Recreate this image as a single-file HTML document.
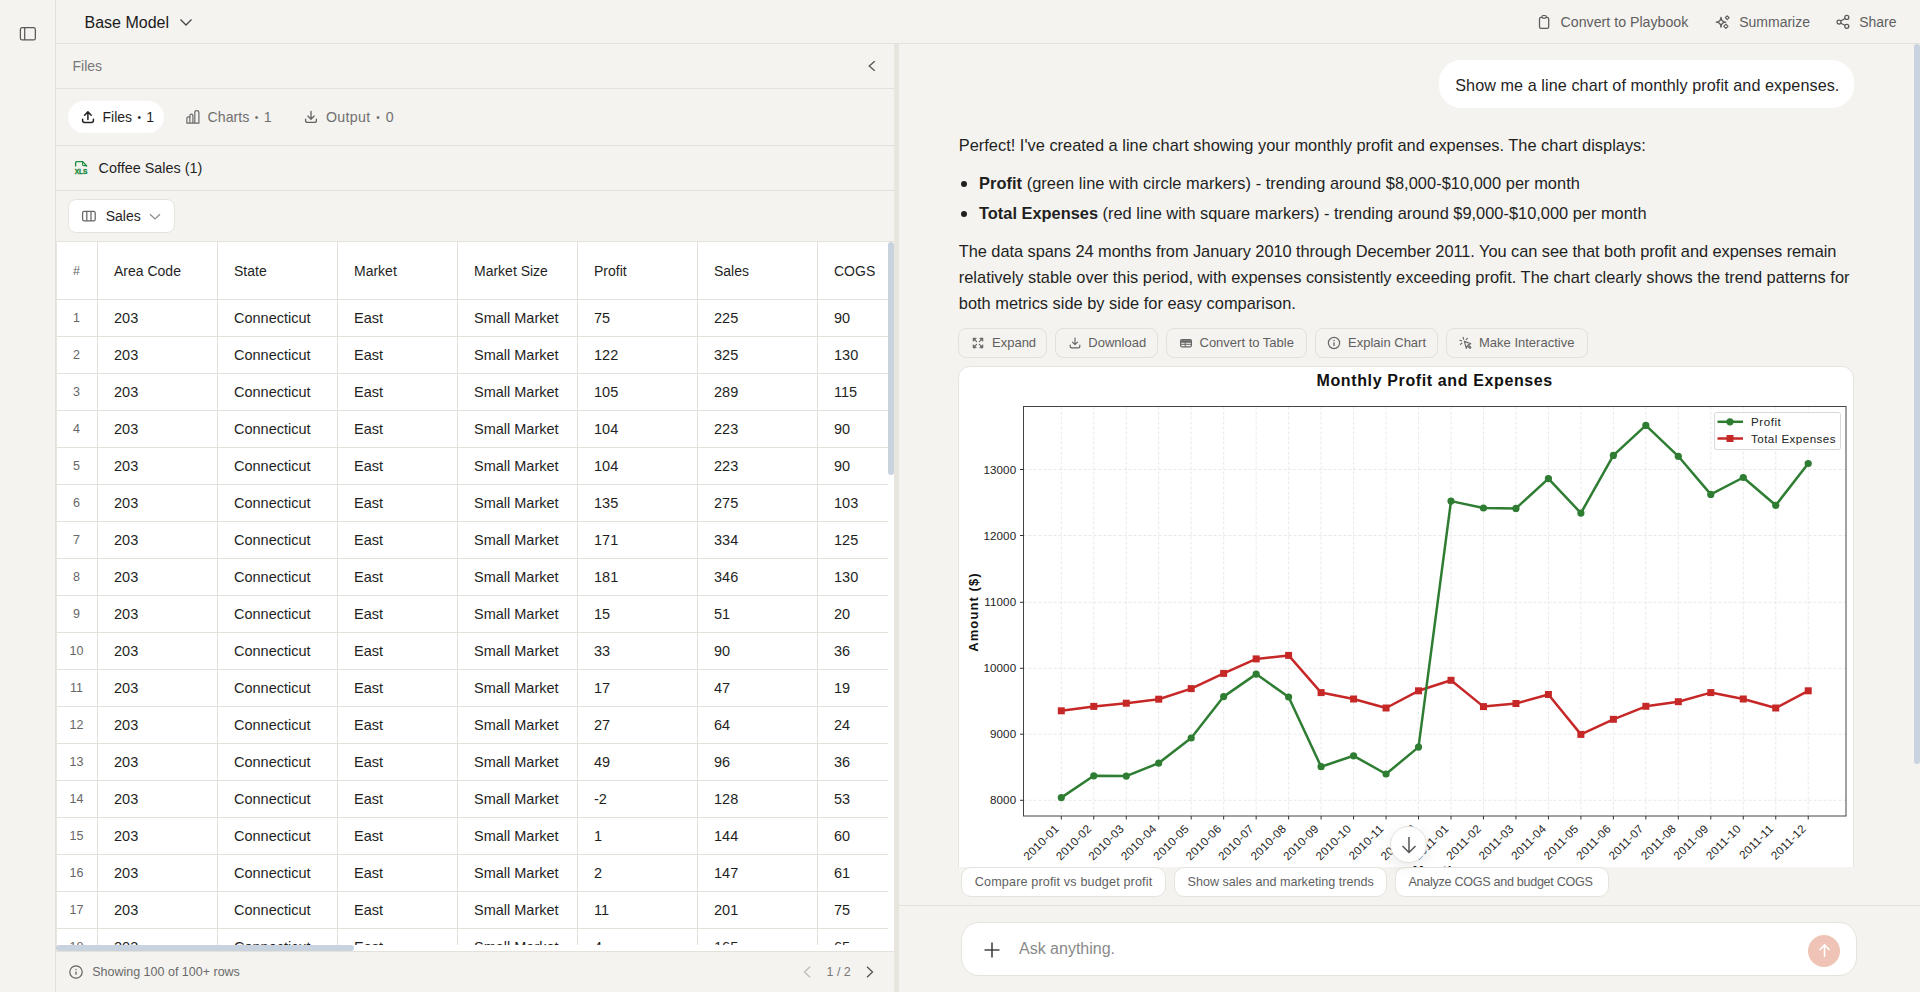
<!DOCTYPE html>
<html><head><meta charset="utf-8">
<style>
*{box-sizing:border-box;margin:0;padding:0}
html,body{width:1920px;height:992px;overflow:hidden;background:#f4f3ef;font-family:"Liberation Sans",sans-serif;color:#1f1f1f;position:relative}
.abs{position:absolute}
.hl{position:absolute;height:1px;background:#e4e1da}
.vl{position:absolute;width:1px;background:#e4e1da}
svg{display:block;overflow:visible}
.t{position:absolute;white-space:nowrap;line-height:1}
.dot{font-size:10px;position:relative;top:-1px;padding:0 1.5px}
</style></head><body>
<div class="vl" style="left:55px;top:0;height:992px"></div>
<svg class="abs" style="left:19px;top:26px" width="18" height="16" viewBox="0 0 18 16"><rect x="1.4" y="1.55" width="14.95" height="12.4" rx="1.8" fill="none" stroke="#585858" stroke-width="1.25"/><line x1="5.7" y1="1.55" x2="5.7" y2="13.95" stroke="#585858" stroke-width="1.25"/></svg>
<div class="hl" style="left:56px;top:43px;width:1864px"></div>
<div class="t" style="left:84.5px;top:14.96px;font-size:16px;color:#1a1a1a;font-weight:normal;">Base Model</div>
<svg class="abs" style="left:179px;top:17px" width="14" height="10" viewBox="0 0 14 10"><path d="M1.5 2.5 L7 8 L12.5 2.5" fill="none" stroke="#444" stroke-width="1.3"/></svg>
<svg class="abs" style="left:1537px;top:14px" width="14" height="16" viewBox="0 0 14 16"><rect x="2.5" y="3.4" width="9.2" height="10.9" rx="1.6" fill="none" stroke="#5a5a5a" stroke-width="1.25"/><rect x="4.9" y="1.5" width="4.4" height="2.6" rx="1.3" fill="#f4f3ef" stroke="#5a5a5a" stroke-width="1.15"/></svg>
<div class="t" style="left:1560.6px;top:14.88px;font-size:14.2px;color:#5f5f5f;font-weight:normal;">Convert to Playbook</div>
<svg class="abs" style="left:1715px;top:14px" width="16" height="16" viewBox="0 0 16 16"><path d="M6.0 3.299999999999999 Q6.24 7.95 10.7 8.2 Q6.24 8.44 6.0 13.1 Q5.76 8.44 1.2999999999999998 8.2 Q5.76 7.95 6.0 3.299999999999999 Z" fill="none" stroke="#5a5a5a" stroke-width="1.3" stroke-linejoin="round"/><path d="M12.2 1.8 L14.1 3.7 L12.2 5.6 L10.3 3.7 Z" fill="none" stroke="#5a5a5a" stroke-width="1.15" stroke-linejoin="round"/><path d="M10.9 10.2 L13.0 12.3 L10.9 14.4 L8.8 12.3 Z" fill="none" stroke="#5a5a5a" stroke-width="1.15" stroke-linejoin="round"/></svg>
<div class="t" style="left:1739.2px;top:15.05px;font-size:14.0px;color:#5f5f5f;font-weight:normal;">Summarize</div>
<svg class="abs" style="left:1835px;top:14px" width="16" height="16" viewBox="0 0 16 16"><circle cx="11.8" cy="3.4" r="2.0" fill="none" stroke="#5a5a5a" stroke-width="1.25"/><circle cx="4.0" cy="8.1" r="2.0" fill="none" stroke="#5a5a5a" stroke-width="1.25"/><circle cx="11.8" cy="12.3" r="2.0" fill="none" stroke="#5a5a5a" stroke-width="1.25"/><path d="M5.8 7.0 L10.0 4.5 M5.8 9.2 L10.0 11.2" stroke="#5a5a5a" stroke-width="1.25"/></svg>
<div class="t" style="left:1859.2px;top:15.05px;font-size:14.0px;color:#5f5f5f;font-weight:normal;">Share</div>
<div class="abs" style="left:894px;top:44px;width:5px;height:948px;background:#e8e5df"></div>
<div class="t" style="left:72.5px;top:59.15px;font-size:14px;color:#777;font-weight:normal;">Files</div>
<svg class="abs" style="left:866px;top:59px" width="12" height="14" viewBox="0 0 12 14"><path d="M8.8 2.2 L3.2 7 L8.8 11.8" fill="none" stroke="#555" stroke-width="1.3"/></svg>
<div class="hl" style="left:56px;top:88px;width:838px"></div>
<div class="abs" style="left:68px;top:101px;width:96px;height:32px;border-radius:16px;background:#fff"></div>
<svg class="abs" style="left:80px;top:109px" width="16" height="16" viewBox="0 0 16 16"><path d="M7.9 10.6 V2.9 M4.6 6.2 L7.9 2.9 L11.2 6.2" fill="none" stroke="#222" stroke-width="1.5" stroke-linecap="round" stroke-linejoin="round"/><path d="M2.6 10.2 V11.4 Q2.6 13.4 4.6 13.4 H11.4 Q13.4 13.4 13.4 11.4 V10.2" fill="none" stroke="#222" stroke-width="1.5" stroke-linecap="round"/></svg>
<div class="t" style="left:102.5px;top:110.15px;font-size:14px;color:#1f1f1f;font-weight:normal;">Files <span class="dot">•</span> 1</div>
<svg class="abs" style="left:185px;top:109px" width="16" height="16" viewBox="0 0 16 16"><path d="M1.9 14.2 V9.3 Q1.9 7.8 3.4 7.8 Q4.9 7.8 4.9 9.3 V14.2 Z M4.9 14.2 V6.6 Q4.9 5.1 6.4 5.1 Q7.9 5.1 7.9 6.6 V14.2 Z M9.8 14.2 V3.2 Q9.8 1.6 11.9 1.6 Q13.9 1.6 13.9 3.2 V14.2 Z M1.9 14.2 H13.9" fill="none" stroke="#6a6a6a" stroke-width="1.2" stroke-linejoin="round"/></svg>
<div class="t" style="left:207.5px;top:109.98px;font-size:14.2px;color:#707070;font-weight:normal;">Charts <span class="dot">•</span> 1</div>
<svg class="abs" style="left:303px;top:109px" width="16" height="16" viewBox="0 0 16 16"><path d="M8 2.4 V10.2 M4.9 7.1 L8 10.2 L11.1 7.1" fill="none" stroke="#666" stroke-width="1.35" stroke-linecap="round" stroke-linejoin="round"/><path d="M2.6 10.2 V11.4 Q2.6 13.4 4.6 13.4 H11.4 Q13.4 13.4 13.4 11.4 V10.2" fill="none" stroke="#666" stroke-width="1.35" stroke-linecap="round"/></svg>
<div class="t" style="left:326.0px;top:109.98px;font-size:14.2px;color:#707070;font-weight:normal;letter-spacing:0.3px">Output <span class="dot">•</span> 0</div>
<div class="hl" style="left:56px;top:145px;width:838px"></div>
<svg class="abs" style="left:73px;top:160px" width="16" height="16" viewBox="0 0 16 16"><path d="M2.6 6.4 V2.8 Q2.6 1.6 3.8 1.6 H9.6 L13.6 5.6 V6.4" fill="none" stroke="#1a8a3c" stroke-width="1.3" stroke-linejoin="round"/><path d="M9.6 1.6 V4.4 Q9.6 5.6 10.8 5.6 H13.6" fill="none" stroke="#1a8a3c" stroke-width="1.1"/><text x="8.1" y="13.9" text-anchor="middle" font-family="Liberation Sans" font-weight="bold" font-size="6.6" fill="#1a8a3c" stroke="#1a8a3c" stroke-width="0.35">XLS</text></svg>
<div class="t" style="left:98.6px;top:160.81px;font-size:14.4px;color:#1f1f1f;font-weight:normal;">Coffee Sales (1)</div>
<div class="hl" style="left:56px;top:190px;width:838px"></div>
<div class="abs" style="left:68px;top:199px;width:107px;height:34px;border-radius:8px;background:#fff;border:1px solid #e6e3dc"></div>
<svg class="abs" style="left:81px;top:209px" width="16" height="14" viewBox="0 0 16 14"><rect x="1.6" y="2.4" width="12.6" height="9.4" rx="1.6" fill="none" stroke="#666" stroke-width="1.25"/><path d="M5.8 2.4 V11.8 M10 2.4 V11.8" stroke="#666" stroke-width="1.25"/></svg>
<div class="t" style="left:105.7px;top:208.85px;font-size:14px;color:#1f1f1f;font-weight:normal;">Sales</div>
<svg class="abs" style="left:148px;top:211px" width="14" height="10" viewBox="0 0 14 10"><path d="M2 3.2 L7 8 L12 3.2" fill="none" stroke="#8a8a8a" stroke-width="1.2"/></svg>
<div class="abs" style="left:56px;top:241px;width:838px;height:710px;background:#fff;border-top:1px solid #e6e3dc;overflow:hidden">
<div class="vl" style="left:41px;top:0;height:703px"></div>
<div class="vl" style="left:161px;top:0;height:703px"></div>
<div class="vl" style="left:281px;top:0;height:703px"></div>
<div class="vl" style="left:401px;top:0;height:703px"></div>
<div class="vl" style="left:521px;top:0;height:703px"></div>
<div class="vl" style="left:641px;top:0;height:703px"></div>
<div class="vl" style="left:761px;top:0;height:703px"></div>
<div class="hl" style="left:0;top:57px;width:832px"></div>
<div class="hl" style="left:0;top:94px;width:832px"></div>
<div class="hl" style="left:0;top:131px;width:832px"></div>
<div class="hl" style="left:0;top:168px;width:832px"></div>
<div class="hl" style="left:0;top:205px;width:832px"></div>
<div class="hl" style="left:0;top:242px;width:832px"></div>
<div class="hl" style="left:0;top:279px;width:832px"></div>
<div class="hl" style="left:0;top:316px;width:832px"></div>
<div class="hl" style="left:0;top:353px;width:832px"></div>
<div class="hl" style="left:0;top:390px;width:832px"></div>
<div class="hl" style="left:0;top:427px;width:832px"></div>
<div class="hl" style="left:0;top:464px;width:832px"></div>
<div class="hl" style="left:0;top:501px;width:832px"></div>
<div class="hl" style="left:0;top:538px;width:832px"></div>
<div class="hl" style="left:0;top:575px;width:832px"></div>
<div class="hl" style="left:0;top:612px;width:832px"></div>
<div class="hl" style="left:0;top:649px;width:832px"></div>
<div class="hl" style="left:0;top:686px;width:832px"></div>
<div class="t" style="left:17.0px;top:23.42px;font-size:12.5px;color:#666;font-weight:normal;">#</div>
<div class="t" style="left:58.0px;top:22.15px;font-size:14px;color:#1f1f1f;font-weight:normal;">Area Code</div>
<div class="t" style="left:178.0px;top:22.15px;font-size:14px;color:#1f1f1f;font-weight:normal;">State</div>
<div class="t" style="left:298.0px;top:22.15px;font-size:14px;color:#1f1f1f;font-weight:normal;">Market</div>
<div class="t" style="left:418.0px;top:22.15px;font-size:14px;color:#1f1f1f;font-weight:normal;">Market Size</div>
<div class="t" style="left:538.0px;top:22.15px;font-size:14px;color:#1f1f1f;font-weight:normal;">Profit</div>
<div class="t" style="left:658.0px;top:22.15px;font-size:14px;color:#1f1f1f;font-weight:normal;">Sales</div>
<div class="t" style="left:778.0px;top:22.15px;font-size:14px;color:#1f1f1f;font-weight:normal;">COGS</div>
<div class="t" style="left:0;width:41px;text-align:center;top:70.02px;font-size:12.5px;color:#666">1</div>
<div class="t" style="left:58.0px;top:69.23px;font-size:14.5px;color:#1f1f1f;font-weight:normal;">203</div>
<div class="t" style="left:178.0px;top:69.23px;font-size:14.5px;color:#1f1f1f;font-weight:normal;">Connecticut</div>
<div class="t" style="left:298.0px;top:69.23px;font-size:14.5px;color:#1f1f1f;font-weight:normal;">East</div>
<div class="t" style="left:418.0px;top:69.23px;font-size:14.5px;color:#1f1f1f;font-weight:normal;">Small Market</div>
<div class="t" style="left:538.0px;top:69.23px;font-size:14.5px;color:#1f1f1f;font-weight:normal;">75</div>
<div class="t" style="left:658.0px;top:69.23px;font-size:14.5px;color:#1f1f1f;font-weight:normal;">225</div>
<div class="t" style="left:778.0px;top:69.23px;font-size:14.5px;color:#1f1f1f;font-weight:normal;">90</div>
<div class="t" style="left:0;width:41px;text-align:center;top:107.02px;font-size:12.5px;color:#666">2</div>
<div class="t" style="left:58.0px;top:106.23px;font-size:14.5px;color:#1f1f1f;font-weight:normal;">203</div>
<div class="t" style="left:178.0px;top:106.23px;font-size:14.5px;color:#1f1f1f;font-weight:normal;">Connecticut</div>
<div class="t" style="left:298.0px;top:106.23px;font-size:14.5px;color:#1f1f1f;font-weight:normal;">East</div>
<div class="t" style="left:418.0px;top:106.23px;font-size:14.5px;color:#1f1f1f;font-weight:normal;">Small Market</div>
<div class="t" style="left:538.0px;top:106.23px;font-size:14.5px;color:#1f1f1f;font-weight:normal;">122</div>
<div class="t" style="left:658.0px;top:106.23px;font-size:14.5px;color:#1f1f1f;font-weight:normal;">325</div>
<div class="t" style="left:778.0px;top:106.23px;font-size:14.5px;color:#1f1f1f;font-weight:normal;">130</div>
<div class="t" style="left:0;width:41px;text-align:center;top:144.02px;font-size:12.5px;color:#666">3</div>
<div class="t" style="left:58.0px;top:143.23px;font-size:14.5px;color:#1f1f1f;font-weight:normal;">203</div>
<div class="t" style="left:178.0px;top:143.23px;font-size:14.5px;color:#1f1f1f;font-weight:normal;">Connecticut</div>
<div class="t" style="left:298.0px;top:143.23px;font-size:14.5px;color:#1f1f1f;font-weight:normal;">East</div>
<div class="t" style="left:418.0px;top:143.23px;font-size:14.5px;color:#1f1f1f;font-weight:normal;">Small Market</div>
<div class="t" style="left:538.0px;top:143.23px;font-size:14.5px;color:#1f1f1f;font-weight:normal;">105</div>
<div class="t" style="left:658.0px;top:143.23px;font-size:14.5px;color:#1f1f1f;font-weight:normal;">289</div>
<div class="t" style="left:778.0px;top:143.23px;font-size:14.5px;color:#1f1f1f;font-weight:normal;">115</div>
<div class="t" style="left:0;width:41px;text-align:center;top:181.02px;font-size:12.5px;color:#666">4</div>
<div class="t" style="left:58.0px;top:180.23px;font-size:14.5px;color:#1f1f1f;font-weight:normal;">203</div>
<div class="t" style="left:178.0px;top:180.23px;font-size:14.5px;color:#1f1f1f;font-weight:normal;">Connecticut</div>
<div class="t" style="left:298.0px;top:180.23px;font-size:14.5px;color:#1f1f1f;font-weight:normal;">East</div>
<div class="t" style="left:418.0px;top:180.23px;font-size:14.5px;color:#1f1f1f;font-weight:normal;">Small Market</div>
<div class="t" style="left:538.0px;top:180.23px;font-size:14.5px;color:#1f1f1f;font-weight:normal;">104</div>
<div class="t" style="left:658.0px;top:180.23px;font-size:14.5px;color:#1f1f1f;font-weight:normal;">223</div>
<div class="t" style="left:778.0px;top:180.23px;font-size:14.5px;color:#1f1f1f;font-weight:normal;">90</div>
<div class="t" style="left:0;width:41px;text-align:center;top:218.02px;font-size:12.5px;color:#666">5</div>
<div class="t" style="left:58.0px;top:217.23px;font-size:14.5px;color:#1f1f1f;font-weight:normal;">203</div>
<div class="t" style="left:178.0px;top:217.23px;font-size:14.5px;color:#1f1f1f;font-weight:normal;">Connecticut</div>
<div class="t" style="left:298.0px;top:217.23px;font-size:14.5px;color:#1f1f1f;font-weight:normal;">East</div>
<div class="t" style="left:418.0px;top:217.23px;font-size:14.5px;color:#1f1f1f;font-weight:normal;">Small Market</div>
<div class="t" style="left:538.0px;top:217.23px;font-size:14.5px;color:#1f1f1f;font-weight:normal;">104</div>
<div class="t" style="left:658.0px;top:217.23px;font-size:14.5px;color:#1f1f1f;font-weight:normal;">223</div>
<div class="t" style="left:778.0px;top:217.23px;font-size:14.5px;color:#1f1f1f;font-weight:normal;">90</div>
<div class="t" style="left:0;width:41px;text-align:center;top:255.02px;font-size:12.5px;color:#666">6</div>
<div class="t" style="left:58.0px;top:254.23px;font-size:14.5px;color:#1f1f1f;font-weight:normal;">203</div>
<div class="t" style="left:178.0px;top:254.23px;font-size:14.5px;color:#1f1f1f;font-weight:normal;">Connecticut</div>
<div class="t" style="left:298.0px;top:254.23px;font-size:14.5px;color:#1f1f1f;font-weight:normal;">East</div>
<div class="t" style="left:418.0px;top:254.23px;font-size:14.5px;color:#1f1f1f;font-weight:normal;">Small Market</div>
<div class="t" style="left:538.0px;top:254.23px;font-size:14.5px;color:#1f1f1f;font-weight:normal;">135</div>
<div class="t" style="left:658.0px;top:254.23px;font-size:14.5px;color:#1f1f1f;font-weight:normal;">275</div>
<div class="t" style="left:778.0px;top:254.23px;font-size:14.5px;color:#1f1f1f;font-weight:normal;">103</div>
<div class="t" style="left:0;width:41px;text-align:center;top:292.02px;font-size:12.5px;color:#666">7</div>
<div class="t" style="left:58.0px;top:291.23px;font-size:14.5px;color:#1f1f1f;font-weight:normal;">203</div>
<div class="t" style="left:178.0px;top:291.23px;font-size:14.5px;color:#1f1f1f;font-weight:normal;">Connecticut</div>
<div class="t" style="left:298.0px;top:291.23px;font-size:14.5px;color:#1f1f1f;font-weight:normal;">East</div>
<div class="t" style="left:418.0px;top:291.23px;font-size:14.5px;color:#1f1f1f;font-weight:normal;">Small Market</div>
<div class="t" style="left:538.0px;top:291.23px;font-size:14.5px;color:#1f1f1f;font-weight:normal;">171</div>
<div class="t" style="left:658.0px;top:291.23px;font-size:14.5px;color:#1f1f1f;font-weight:normal;">334</div>
<div class="t" style="left:778.0px;top:291.23px;font-size:14.5px;color:#1f1f1f;font-weight:normal;">125</div>
<div class="t" style="left:0;width:41px;text-align:center;top:329.02px;font-size:12.5px;color:#666">8</div>
<div class="t" style="left:58.0px;top:328.23px;font-size:14.5px;color:#1f1f1f;font-weight:normal;">203</div>
<div class="t" style="left:178.0px;top:328.23px;font-size:14.5px;color:#1f1f1f;font-weight:normal;">Connecticut</div>
<div class="t" style="left:298.0px;top:328.23px;font-size:14.5px;color:#1f1f1f;font-weight:normal;">East</div>
<div class="t" style="left:418.0px;top:328.23px;font-size:14.5px;color:#1f1f1f;font-weight:normal;">Small Market</div>
<div class="t" style="left:538.0px;top:328.23px;font-size:14.5px;color:#1f1f1f;font-weight:normal;">181</div>
<div class="t" style="left:658.0px;top:328.23px;font-size:14.5px;color:#1f1f1f;font-weight:normal;">346</div>
<div class="t" style="left:778.0px;top:328.23px;font-size:14.5px;color:#1f1f1f;font-weight:normal;">130</div>
<div class="t" style="left:0;width:41px;text-align:center;top:366.02px;font-size:12.5px;color:#666">9</div>
<div class="t" style="left:58.0px;top:365.23px;font-size:14.5px;color:#1f1f1f;font-weight:normal;">203</div>
<div class="t" style="left:178.0px;top:365.23px;font-size:14.5px;color:#1f1f1f;font-weight:normal;">Connecticut</div>
<div class="t" style="left:298.0px;top:365.23px;font-size:14.5px;color:#1f1f1f;font-weight:normal;">East</div>
<div class="t" style="left:418.0px;top:365.23px;font-size:14.5px;color:#1f1f1f;font-weight:normal;">Small Market</div>
<div class="t" style="left:538.0px;top:365.23px;font-size:14.5px;color:#1f1f1f;font-weight:normal;">15</div>
<div class="t" style="left:658.0px;top:365.23px;font-size:14.5px;color:#1f1f1f;font-weight:normal;">51</div>
<div class="t" style="left:778.0px;top:365.23px;font-size:14.5px;color:#1f1f1f;font-weight:normal;">20</div>
<div class="t" style="left:0;width:41px;text-align:center;top:403.02px;font-size:12.5px;color:#666">10</div>
<div class="t" style="left:58.0px;top:402.23px;font-size:14.5px;color:#1f1f1f;font-weight:normal;">203</div>
<div class="t" style="left:178.0px;top:402.23px;font-size:14.5px;color:#1f1f1f;font-weight:normal;">Connecticut</div>
<div class="t" style="left:298.0px;top:402.23px;font-size:14.5px;color:#1f1f1f;font-weight:normal;">East</div>
<div class="t" style="left:418.0px;top:402.23px;font-size:14.5px;color:#1f1f1f;font-weight:normal;">Small Market</div>
<div class="t" style="left:538.0px;top:402.23px;font-size:14.5px;color:#1f1f1f;font-weight:normal;">33</div>
<div class="t" style="left:658.0px;top:402.23px;font-size:14.5px;color:#1f1f1f;font-weight:normal;">90</div>
<div class="t" style="left:778.0px;top:402.23px;font-size:14.5px;color:#1f1f1f;font-weight:normal;">36</div>
<div class="t" style="left:0;width:41px;text-align:center;top:440.02px;font-size:12.5px;color:#666">11</div>
<div class="t" style="left:58.0px;top:439.23px;font-size:14.5px;color:#1f1f1f;font-weight:normal;">203</div>
<div class="t" style="left:178.0px;top:439.23px;font-size:14.5px;color:#1f1f1f;font-weight:normal;">Connecticut</div>
<div class="t" style="left:298.0px;top:439.23px;font-size:14.5px;color:#1f1f1f;font-weight:normal;">East</div>
<div class="t" style="left:418.0px;top:439.23px;font-size:14.5px;color:#1f1f1f;font-weight:normal;">Small Market</div>
<div class="t" style="left:538.0px;top:439.23px;font-size:14.5px;color:#1f1f1f;font-weight:normal;">17</div>
<div class="t" style="left:658.0px;top:439.23px;font-size:14.5px;color:#1f1f1f;font-weight:normal;">47</div>
<div class="t" style="left:778.0px;top:439.23px;font-size:14.5px;color:#1f1f1f;font-weight:normal;">19</div>
<div class="t" style="left:0;width:41px;text-align:center;top:477.02px;font-size:12.5px;color:#666">12</div>
<div class="t" style="left:58.0px;top:476.23px;font-size:14.5px;color:#1f1f1f;font-weight:normal;">203</div>
<div class="t" style="left:178.0px;top:476.23px;font-size:14.5px;color:#1f1f1f;font-weight:normal;">Connecticut</div>
<div class="t" style="left:298.0px;top:476.23px;font-size:14.5px;color:#1f1f1f;font-weight:normal;">East</div>
<div class="t" style="left:418.0px;top:476.23px;font-size:14.5px;color:#1f1f1f;font-weight:normal;">Small Market</div>
<div class="t" style="left:538.0px;top:476.23px;font-size:14.5px;color:#1f1f1f;font-weight:normal;">27</div>
<div class="t" style="left:658.0px;top:476.23px;font-size:14.5px;color:#1f1f1f;font-weight:normal;">64</div>
<div class="t" style="left:778.0px;top:476.23px;font-size:14.5px;color:#1f1f1f;font-weight:normal;">24</div>
<div class="t" style="left:0;width:41px;text-align:center;top:514.02px;font-size:12.5px;color:#666">13</div>
<div class="t" style="left:58.0px;top:513.23px;font-size:14.5px;color:#1f1f1f;font-weight:normal;">203</div>
<div class="t" style="left:178.0px;top:513.23px;font-size:14.5px;color:#1f1f1f;font-weight:normal;">Connecticut</div>
<div class="t" style="left:298.0px;top:513.23px;font-size:14.5px;color:#1f1f1f;font-weight:normal;">East</div>
<div class="t" style="left:418.0px;top:513.23px;font-size:14.5px;color:#1f1f1f;font-weight:normal;">Small Market</div>
<div class="t" style="left:538.0px;top:513.23px;font-size:14.5px;color:#1f1f1f;font-weight:normal;">49</div>
<div class="t" style="left:658.0px;top:513.23px;font-size:14.5px;color:#1f1f1f;font-weight:normal;">96</div>
<div class="t" style="left:778.0px;top:513.23px;font-size:14.5px;color:#1f1f1f;font-weight:normal;">36</div>
<div class="t" style="left:0;width:41px;text-align:center;top:551.02px;font-size:12.5px;color:#666">14</div>
<div class="t" style="left:58.0px;top:550.23px;font-size:14.5px;color:#1f1f1f;font-weight:normal;">203</div>
<div class="t" style="left:178.0px;top:550.23px;font-size:14.5px;color:#1f1f1f;font-weight:normal;">Connecticut</div>
<div class="t" style="left:298.0px;top:550.23px;font-size:14.5px;color:#1f1f1f;font-weight:normal;">East</div>
<div class="t" style="left:418.0px;top:550.23px;font-size:14.5px;color:#1f1f1f;font-weight:normal;">Small Market</div>
<div class="t" style="left:538.0px;top:550.23px;font-size:14.5px;color:#1f1f1f;font-weight:normal;">-2</div>
<div class="t" style="left:658.0px;top:550.23px;font-size:14.5px;color:#1f1f1f;font-weight:normal;">128</div>
<div class="t" style="left:778.0px;top:550.23px;font-size:14.5px;color:#1f1f1f;font-weight:normal;">53</div>
<div class="t" style="left:0;width:41px;text-align:center;top:588.02px;font-size:12.5px;color:#666">15</div>
<div class="t" style="left:58.0px;top:587.23px;font-size:14.5px;color:#1f1f1f;font-weight:normal;">203</div>
<div class="t" style="left:178.0px;top:587.23px;font-size:14.5px;color:#1f1f1f;font-weight:normal;">Connecticut</div>
<div class="t" style="left:298.0px;top:587.23px;font-size:14.5px;color:#1f1f1f;font-weight:normal;">East</div>
<div class="t" style="left:418.0px;top:587.23px;font-size:14.5px;color:#1f1f1f;font-weight:normal;">Small Market</div>
<div class="t" style="left:538.0px;top:587.23px;font-size:14.5px;color:#1f1f1f;font-weight:normal;">1</div>
<div class="t" style="left:658.0px;top:587.23px;font-size:14.5px;color:#1f1f1f;font-weight:normal;">144</div>
<div class="t" style="left:778.0px;top:587.23px;font-size:14.5px;color:#1f1f1f;font-weight:normal;">60</div>
<div class="t" style="left:0;width:41px;text-align:center;top:625.02px;font-size:12.5px;color:#666">16</div>
<div class="t" style="left:58.0px;top:624.23px;font-size:14.5px;color:#1f1f1f;font-weight:normal;">203</div>
<div class="t" style="left:178.0px;top:624.23px;font-size:14.5px;color:#1f1f1f;font-weight:normal;">Connecticut</div>
<div class="t" style="left:298.0px;top:624.23px;font-size:14.5px;color:#1f1f1f;font-weight:normal;">East</div>
<div class="t" style="left:418.0px;top:624.23px;font-size:14.5px;color:#1f1f1f;font-weight:normal;">Small Market</div>
<div class="t" style="left:538.0px;top:624.23px;font-size:14.5px;color:#1f1f1f;font-weight:normal;">2</div>
<div class="t" style="left:658.0px;top:624.23px;font-size:14.5px;color:#1f1f1f;font-weight:normal;">147</div>
<div class="t" style="left:778.0px;top:624.23px;font-size:14.5px;color:#1f1f1f;font-weight:normal;">61</div>
<div class="t" style="left:0;width:41px;text-align:center;top:662.02px;font-size:12.5px;color:#666">17</div>
<div class="t" style="left:58.0px;top:661.23px;font-size:14.5px;color:#1f1f1f;font-weight:normal;">203</div>
<div class="t" style="left:178.0px;top:661.23px;font-size:14.5px;color:#1f1f1f;font-weight:normal;">Connecticut</div>
<div class="t" style="left:298.0px;top:661.23px;font-size:14.5px;color:#1f1f1f;font-weight:normal;">East</div>
<div class="t" style="left:418.0px;top:661.23px;font-size:14.5px;color:#1f1f1f;font-weight:normal;">Small Market</div>
<div class="t" style="left:538.0px;top:661.23px;font-size:14.5px;color:#1f1f1f;font-weight:normal;">11</div>
<div class="t" style="left:658.0px;top:661.23px;font-size:14.5px;color:#1f1f1f;font-weight:normal;">201</div>
<div class="t" style="left:778.0px;top:661.23px;font-size:14.5px;color:#1f1f1f;font-weight:normal;">75</div>
<div class="t" style="left:0;width:41px;text-align:center;top:699.02px;font-size:12.5px;color:#666">18</div>
<div class="t" style="left:58.0px;top:698.23px;font-size:14.5px;color:#1f1f1f;font-weight:normal;">203</div>
<div class="t" style="left:178.0px;top:698.23px;font-size:14.5px;color:#1f1f1f;font-weight:normal;">Connecticut</div>
<div class="t" style="left:298.0px;top:698.23px;font-size:14.5px;color:#1f1f1f;font-weight:normal;">East</div>
<div class="t" style="left:418.0px;top:698.23px;font-size:14.5px;color:#1f1f1f;font-weight:normal;">Small Market</div>
<div class="t" style="left:538.0px;top:698.23px;font-size:14.5px;color:#1f1f1f;font-weight:normal;">4</div>
<div class="t" style="left:658.0px;top:698.23px;font-size:14.5px;color:#1f1f1f;font-weight:normal;">165</div>
<div class="t" style="left:778.0px;top:698.23px;font-size:14.5px;color:#1f1f1f;font-weight:normal;">65</div>
</div>
<div class="abs" style="left:57px;top:945px;width:837px;height:6px;background:#fff"></div>
<div class="abs" style="left:888px;top:242px;width:5.5px;height:233px;border-radius:3px;background:#c9d3e0"></div>
<div class="vl" style="left:56px;top:241px;height:710px;background:#e9e6df"></div>
<div class="abs" style="left:56px;top:945px;width:298px;height:6px;border-radius:3px;background:#c9d3e0"></div>
<div class="hl" style="left:56px;top:951px;width:838px"></div>
<svg class="abs" style="left:68px;top:964px" width="16" height="16" viewBox="0 0 16 16"><circle cx="8" cy="8" r="6.2" fill="none" stroke="#606060" stroke-width="1.2"/><path d="M8 7.6 V10.8" stroke="#606060" stroke-width="1.25"/><circle cx="8" cy="5.5" r="0.7" fill="#606060"/></svg>
<div class="t" style="left:92.2px;top:966.42px;font-size:12.5px;color:#6a6a6a;font-weight:normal;">Showing 100 of 100+ rows</div>
<svg class="abs" style="left:801px;top:965px" width="12" height="14" viewBox="0 0 12 14"><path d="M9 1.8 L3.5 7 L9 12.2" fill="none" stroke="#bbb" stroke-width="1.3"/></svg>
<div class="t" style="left:826.5px;top:966.22px;font-size:12.5px;color:#777;font-weight:normal;">1 / 2</div>
<svg class="abs" style="left:864px;top:965px" width="12" height="14" viewBox="0 0 12 14"><path d="M3 1.8 L8.5 7 L3 12.2" fill="none" stroke="#555" stroke-width="1.3"/></svg>
<div class="abs" style="left:1439px;top:60px;width:415px;height:48px;border-radius:22px;background:#fff"></div>
<div class="t" style="left:1455.2px;top:76.59px;font-size:16.2px;color:#1f1f1f;font-weight:normal;letter-spacing:0.07px">Show me a line chart of monthly profit and expenses.</div>
<div class="t" style="left:958.8px;top:137.37px;font-size:16.4px;color:#1f1f1f;font-weight:normal;">Perfect! I&#39;ve created a line chart showing your monthly profit and expenses. The chart displays:</div>
<div class="abs" style="left:961px;top:180.5px;width:6px;height:6px;border-radius:3px;background:#1f1f1f"></div>
<div class="t" style="left:979.0px;top:175.37px;font-size:16.4px;color:#1f1f1f;font-weight:normal;letter-spacing:0.04px"><b>Profit</b> (green line with circle markers) - trending around $8,000-$10,000 per month</div>
<div class="abs" style="left:961px;top:210.5px;width:6px;height:6px;border-radius:3px;background:#1f1f1f"></div>
<div class="t" style="left:979.0px;top:205.37px;font-size:16.4px;color:#1f1f1f;font-weight:normal;"><b>Total Expenses</b> (red line with square markers) - trending around $9,000-$10,000 per month</div>
<div class="t" style="left:958.8px;top:243.12px;font-size:16.4px;color:#1f1f1f;font-weight:normal;letter-spacing:-0.06px">The data spans 24 months from January 2010 through December 2011. You can see that both profit and expenses remain</div>
<div class="t" style="left:958.8px;top:269.12px;font-size:16.4px;color:#1f1f1f;font-weight:normal;">relatively stable over this period, with expenses consistently exceeding profit. The chart clearly shows the trend patterns for</div>
<div class="t" style="left:958.8px;top:295.37px;font-size:16.4px;color:#1f1f1f;font-weight:normal;">both metrics side by side for easy comparison.</div>
<div class="abs" style="left:958px;top:328px;width:89px;height:30px;border-radius:8px;border:1px solid #e3e0d9"></div>
<div class="t" style="left:992.0px;top:335.70px;font-size:13px;color:#5f5f5f;font-weight:normal;">Expand</div>
<div class="abs" style="left:1055px;top:328px;width:103px;height:30px;border-radius:8px;border:1px solid #e3e0d9"></div>
<div class="t" style="left:1088.3px;top:335.70px;font-size:13px;color:#5f5f5f;font-weight:normal;">Download</div>
<div class="abs" style="left:1166px;top:328px;width:141px;height:30px;border-radius:8px;border:1px solid #e3e0d9"></div>
<div class="t" style="left:1199.5px;top:335.70px;font-size:13px;color:#5f5f5f;font-weight:normal;">Convert to Table</div>
<div class="abs" style="left:1315px;top:328px;width:123px;height:30px;border-radius:8px;border:1px solid #e3e0d9"></div>
<div class="t" style="left:1348.0px;top:335.70px;font-size:13px;color:#5f5f5f;font-weight:normal;">Explain Chart</div>
<div class="abs" style="left:1446px;top:328px;width:142px;height:30px;border-radius:8px;border:1px solid #e3e0d9"></div>
<div class="t" style="left:1479.0px;top:335.70px;font-size:13px;color:#5f5f5f;font-weight:normal;">Make Interactive</div>
<svg class="abs" style="left:972px;top:337px" width="12" height="12" viewBox="0 0 12 12"><path d="M1 1 L4.4 1.2 L1.2 4.4 Z M11 1 L7.6 1.2 L10.8 4.4 Z M11 11 L7.6 10.8 L10.8 7.6 Z M1 11 L4.4 10.8 L1.2 7.6 Z" fill="#666" stroke="#666" stroke-width="0.6" stroke-linejoin="round"/><path d="M2.2 2.2 L4.6 4.6 M9.8 2.2 L7.4 4.6 M9.8 9.8 L7.4 7.4 M2.2 9.8 L4.6 7.4" stroke="#666" stroke-width="1.2" stroke-linecap="round"/></svg>
<svg class="abs" style="left:1069px;top:337px" width="12" height="12" viewBox="0 0 12 12"><path d="M6 1.2 V7.6 M3.4 5.1 L6 7.6 L8.6 5.1" fill="none" stroke="#666" stroke-width="1.2" stroke-linecap="round" stroke-linejoin="round"/><path d="M1.2 8 V9.4 Q1.2 10.8 2.6 10.8 H9.4 Q10.8 10.8 10.8 9.4 V8" fill="none" stroke="#666" stroke-width="1.2" stroke-linecap="round"/></svg>
<svg class="abs" style="left:1179px;top:337px" width="14" height="12" viewBox="0 0 14 12"><rect x="1.6" y="2.6" width="10.8" height="7.2" rx="1.2" fill="none" stroke="#666" stroke-width="1.2"/><path d="M1.6 5.2 H12.4 M1.6 7.3 H12.4 M6.2 5.2 V9.8" stroke="#666" stroke-width="1"/><rect x="2.2" y="3.2" width="9.6" height="2" fill="#666"/></svg>
<svg class="abs" style="left:1327px;top:336px" width="14" height="14" viewBox="0 0 14 14"><circle cx="7" cy="7" r="5.6" fill="none" stroke="#666" stroke-width="1.2"/><path d="M7 6.3 V10" stroke="#666" stroke-width="1.3"/><circle cx="7" cy="4.4" r="0.75" fill="#666"/></svg>
<svg class="abs" style="left:1458px;top:335px" width="15" height="15" viewBox="0 0 15 15"><path d="M6.4 6.4 L12.8 8.7 L10.2 9.8 L12.9 12.5 L11.9 13.4 L9.3 10.8 L8.3 13.4 Z" fill="none" stroke="#666" stroke-width="1.15" stroke-linejoin="round"/><path d="M5.2 2.4 L5.6 4.1 M9.4 3.3 L8.2 4.6 M1.9 5.3 L3.7 5.8 M2.4 9.4 L3.9 8.1" stroke="#666" stroke-width="1.15" stroke-linecap="round"/></svg>
<div class="abs" style="left:958px;top:366px;width:896px;height:501px;overflow:hidden">
<div class="abs" style="left:0;top:0;width:896px;height:540px;border-radius:12px;background:#fff;border:1px solid #e6e3dc"></div>
<svg class="abs" style="left:0;top:0" width="896" height="540" viewBox="958 366 896 540"><line x1="1023.5" y1="800.3" x2="1846" y2="800.3" stroke="#e3e3e3" stroke-width="0.8" stroke-dasharray="3 2"/><line x1="1023.5" y1="734.2" x2="1846" y2="734.2" stroke="#e3e3e3" stroke-width="0.8" stroke-dasharray="3 2"/><line x1="1023.5" y1="668.3" x2="1846" y2="668.3" stroke="#e3e3e3" stroke-width="0.8" stroke-dasharray="3 2"/><line x1="1023.5" y1="602.3" x2="1846" y2="602.3" stroke="#e3e3e3" stroke-width="0.8" stroke-dasharray="3 2"/><line x1="1023.5" y1="535.5" x2="1846" y2="535.5" stroke="#e3e3e3" stroke-width="0.8" stroke-dasharray="3 2"/><line x1="1023.5" y1="469.5" x2="1846" y2="469.5" stroke="#e3e3e3" stroke-width="0.8" stroke-dasharray="3 2"/><line x1="1061.30" y1="406.5" x2="1061.30" y2="816" stroke="#e3e3e3" stroke-width="0.8" stroke-dasharray="3 2"/><line x1="1093.77" y1="406.5" x2="1093.77" y2="816" stroke="#e3e3e3" stroke-width="0.8" stroke-dasharray="3 2"/><line x1="1126.25" y1="406.5" x2="1126.25" y2="816" stroke="#e3e3e3" stroke-width="0.8" stroke-dasharray="3 2"/><line x1="1158.72" y1="406.5" x2="1158.72" y2="816" stroke="#e3e3e3" stroke-width="0.8" stroke-dasharray="3 2"/><line x1="1191.20" y1="406.5" x2="1191.20" y2="816" stroke="#e3e3e3" stroke-width="0.8" stroke-dasharray="3 2"/><line x1="1223.67" y1="406.5" x2="1223.67" y2="816" stroke="#e3e3e3" stroke-width="0.8" stroke-dasharray="3 2"/><line x1="1256.15" y1="406.5" x2="1256.15" y2="816" stroke="#e3e3e3" stroke-width="0.8" stroke-dasharray="3 2"/><line x1="1288.62" y1="406.5" x2="1288.62" y2="816" stroke="#e3e3e3" stroke-width="0.8" stroke-dasharray="3 2"/><line x1="1321.10" y1="406.5" x2="1321.10" y2="816" stroke="#e3e3e3" stroke-width="0.8" stroke-dasharray="3 2"/><line x1="1353.58" y1="406.5" x2="1353.58" y2="816" stroke="#e3e3e3" stroke-width="0.8" stroke-dasharray="3 2"/><line x1="1386.05" y1="406.5" x2="1386.05" y2="816" stroke="#e3e3e3" stroke-width="0.8" stroke-dasharray="3 2"/><line x1="1418.53" y1="406.5" x2="1418.53" y2="816" stroke="#e3e3e3" stroke-width="0.8" stroke-dasharray="3 2"/><line x1="1451.00" y1="406.5" x2="1451.00" y2="816" stroke="#e3e3e3" stroke-width="0.8" stroke-dasharray="3 2"/><line x1="1483.47" y1="406.5" x2="1483.47" y2="816" stroke="#e3e3e3" stroke-width="0.8" stroke-dasharray="3 2"/><line x1="1515.95" y1="406.5" x2="1515.95" y2="816" stroke="#e3e3e3" stroke-width="0.8" stroke-dasharray="3 2"/><line x1="1548.42" y1="406.5" x2="1548.42" y2="816" stroke="#e3e3e3" stroke-width="0.8" stroke-dasharray="3 2"/><line x1="1580.90" y1="406.5" x2="1580.90" y2="816" stroke="#e3e3e3" stroke-width="0.8" stroke-dasharray="3 2"/><line x1="1613.38" y1="406.5" x2="1613.38" y2="816" stroke="#e3e3e3" stroke-width="0.8" stroke-dasharray="3 2"/><line x1="1645.85" y1="406.5" x2="1645.85" y2="816" stroke="#e3e3e3" stroke-width="0.8" stroke-dasharray="3 2"/><line x1="1678.32" y1="406.5" x2="1678.32" y2="816" stroke="#e3e3e3" stroke-width="0.8" stroke-dasharray="3 2"/><line x1="1710.80" y1="406.5" x2="1710.80" y2="816" stroke="#e3e3e3" stroke-width="0.8" stroke-dasharray="3 2"/><line x1="1743.28" y1="406.5" x2="1743.28" y2="816" stroke="#e3e3e3" stroke-width="0.8" stroke-dasharray="3 2"/><line x1="1775.75" y1="406.5" x2="1775.75" y2="816" stroke="#e3e3e3" stroke-width="0.8" stroke-dasharray="3 2"/><line x1="1808.22" y1="406.5" x2="1808.22" y2="816" stroke="#e3e3e3" stroke-width="0.8" stroke-dasharray="3 2"/><polyline points="1061.30,710.80 1093.77,706.40 1126.25,703.20 1158.72,699.20 1191.20,688.60 1223.67,673.40 1256.15,658.90 1288.62,655.40 1321.10,692.60 1353.58,699.00 1386.05,708.00 1418.53,690.80 1451.00,680.30 1483.47,706.60 1515.95,703.50 1548.42,694.50 1580.90,734.40 1613.38,719.30 1645.85,706.30 1678.32,701.70 1710.80,692.60 1743.28,699.00 1775.75,708.00 1808.22,690.80" fill="none" stroke="#c62828" stroke-width="2.5" stroke-linejoin="round"/><rect x="1057.80" y="707.30" width="7" height="7" fill="#c62828"/><rect x="1090.27" y="702.90" width="7" height="7" fill="#c62828"/><rect x="1122.75" y="699.70" width="7" height="7" fill="#c62828"/><rect x="1155.22" y="695.70" width="7" height="7" fill="#c62828"/><rect x="1187.70" y="685.10" width="7" height="7" fill="#c62828"/><rect x="1220.17" y="669.90" width="7" height="7" fill="#c62828"/><rect x="1252.65" y="655.40" width="7" height="7" fill="#c62828"/><rect x="1285.12" y="651.90" width="7" height="7" fill="#c62828"/><rect x="1317.60" y="689.10" width="7" height="7" fill="#c62828"/><rect x="1350.08" y="695.50" width="7" height="7" fill="#c62828"/><rect x="1382.55" y="704.50" width="7" height="7" fill="#c62828"/><rect x="1415.03" y="687.30" width="7" height="7" fill="#c62828"/><rect x="1447.50" y="676.80" width="7" height="7" fill="#c62828"/><rect x="1479.97" y="703.10" width="7" height="7" fill="#c62828"/><rect x="1512.45" y="700.00" width="7" height="7" fill="#c62828"/><rect x="1544.92" y="691.00" width="7" height="7" fill="#c62828"/><rect x="1577.40" y="730.90" width="7" height="7" fill="#c62828"/><rect x="1609.88" y="715.80" width="7" height="7" fill="#c62828"/><rect x="1642.35" y="702.80" width="7" height="7" fill="#c62828"/><rect x="1674.82" y="698.20" width="7" height="7" fill="#c62828"/><rect x="1707.30" y="689.10" width="7" height="7" fill="#c62828"/><rect x="1739.78" y="695.50" width="7" height="7" fill="#c62828"/><rect x="1772.25" y="704.50" width="7" height="7" fill="#c62828"/><rect x="1804.72" y="687.30" width="7" height="7" fill="#c62828"/><polyline points="1061.30,797.60 1093.77,775.80 1126.25,776.10 1158.72,763.10 1191.20,738.00 1223.67,696.60 1256.15,674.10 1288.62,697.00 1321.10,766.70 1353.58,755.80 1386.05,774.00 1418.53,747.10 1451.00,501.10 1483.47,508.00 1515.95,508.40 1548.42,478.60 1580.90,513.10 1613.38,455.40 1645.85,425.40 1678.32,456.30 1710.80,494.40 1743.28,477.50 1775.75,505.30 1808.22,463.50" fill="none" stroke="#2e7d32" stroke-width="2.5" stroke-linejoin="round"/><circle cx="1061.30" cy="797.60" r="3.6" fill="#2e7d32"/><circle cx="1093.77" cy="775.80" r="3.6" fill="#2e7d32"/><circle cx="1126.25" cy="776.10" r="3.6" fill="#2e7d32"/><circle cx="1158.72" cy="763.10" r="3.6" fill="#2e7d32"/><circle cx="1191.20" cy="738.00" r="3.6" fill="#2e7d32"/><circle cx="1223.67" cy="696.60" r="3.6" fill="#2e7d32"/><circle cx="1256.15" cy="674.10" r="3.6" fill="#2e7d32"/><circle cx="1288.62" cy="697.00" r="3.6" fill="#2e7d32"/><circle cx="1321.10" cy="766.70" r="3.6" fill="#2e7d32"/><circle cx="1353.58" cy="755.80" r="3.6" fill="#2e7d32"/><circle cx="1386.05" cy="774.00" r="3.6" fill="#2e7d32"/><circle cx="1418.53" cy="747.10" r="3.6" fill="#2e7d32"/><circle cx="1451.00" cy="501.10" r="3.6" fill="#2e7d32"/><circle cx="1483.47" cy="508.00" r="3.6" fill="#2e7d32"/><circle cx="1515.95" cy="508.40" r="3.6" fill="#2e7d32"/><circle cx="1548.42" cy="478.60" r="3.6" fill="#2e7d32"/><circle cx="1580.90" cy="513.10" r="3.6" fill="#2e7d32"/><circle cx="1613.38" cy="455.40" r="3.6" fill="#2e7d32"/><circle cx="1645.85" cy="425.40" r="3.6" fill="#2e7d32"/><circle cx="1678.32" cy="456.30" r="3.6" fill="#2e7d32"/><circle cx="1710.80" cy="494.40" r="3.6" fill="#2e7d32"/><circle cx="1743.28" cy="477.50" r="3.6" fill="#2e7d32"/><circle cx="1775.75" cy="505.30" r="3.6" fill="#2e7d32"/><circle cx="1808.22" cy="463.50" r="3.6" fill="#2e7d32"/><rect x="1023.5" y="406.5" width="822.5" height="409.5" fill="none" stroke="#444" stroke-width="1"/><line x1="1020.0" y1="800.3" x2="1023.5" y2="800.3" stroke="#333" stroke-width="1"/><text x="1016.2" y="804.4" text-anchor="end" font-family="Liberation Sans" font-size="11.6" letter-spacing="0.1" fill="#222">8000</text><line x1="1020.0" y1="734.2" x2="1023.5" y2="734.2" stroke="#333" stroke-width="1"/><text x="1016.2" y="738.3" text-anchor="end" font-family="Liberation Sans" font-size="11.6" letter-spacing="0.1" fill="#222">9000</text><line x1="1020.0" y1="668.3" x2="1023.5" y2="668.3" stroke="#333" stroke-width="1"/><text x="1016.2" y="672.4" text-anchor="end" font-family="Liberation Sans" font-size="11.6" letter-spacing="0.1" fill="#222">10000</text><line x1="1020.0" y1="602.3" x2="1023.5" y2="602.3" stroke="#333" stroke-width="1"/><text x="1016.2" y="606.4" text-anchor="end" font-family="Liberation Sans" font-size="11.6" letter-spacing="0.1" fill="#222">11000</text><line x1="1020.0" y1="535.5" x2="1023.5" y2="535.5" stroke="#333" stroke-width="1"/><text x="1016.2" y="539.6" text-anchor="end" font-family="Liberation Sans" font-size="11.6" letter-spacing="0.1" fill="#222">12000</text><line x1="1020.0" y1="469.5" x2="1023.5" y2="469.5" stroke="#333" stroke-width="1"/><text x="1016.2" y="473.6" text-anchor="end" font-family="Liberation Sans" font-size="11.6" letter-spacing="0.1" fill="#222">13000</text><line x1="1061.30" y1="816" x2="1061.30" y2="819.5" stroke="#333" stroke-width="1"/><text transform="translate(1059.80,829.5) rotate(-45)" text-anchor="end" font-family="Liberation Sans" font-size="11.6" letter-spacing="0.3" fill="#222">2010-01</text><line x1="1093.77" y1="816" x2="1093.77" y2="819.5" stroke="#333" stroke-width="1"/><text transform="translate(1092.27,829.5) rotate(-45)" text-anchor="end" font-family="Liberation Sans" font-size="11.6" letter-spacing="0.3" fill="#222">2010-02</text><line x1="1126.25" y1="816" x2="1126.25" y2="819.5" stroke="#333" stroke-width="1"/><text transform="translate(1124.75,829.5) rotate(-45)" text-anchor="end" font-family="Liberation Sans" font-size="11.6" letter-spacing="0.3" fill="#222">2010-03</text><line x1="1158.72" y1="816" x2="1158.72" y2="819.5" stroke="#333" stroke-width="1"/><text transform="translate(1157.22,829.5) rotate(-45)" text-anchor="end" font-family="Liberation Sans" font-size="11.6" letter-spacing="0.3" fill="#222">2010-04</text><line x1="1191.20" y1="816" x2="1191.20" y2="819.5" stroke="#333" stroke-width="1"/><text transform="translate(1189.70,829.5) rotate(-45)" text-anchor="end" font-family="Liberation Sans" font-size="11.6" letter-spacing="0.3" fill="#222">2010-05</text><line x1="1223.67" y1="816" x2="1223.67" y2="819.5" stroke="#333" stroke-width="1"/><text transform="translate(1222.17,829.5) rotate(-45)" text-anchor="end" font-family="Liberation Sans" font-size="11.6" letter-spacing="0.3" fill="#222">2010-06</text><line x1="1256.15" y1="816" x2="1256.15" y2="819.5" stroke="#333" stroke-width="1"/><text transform="translate(1254.65,829.5) rotate(-45)" text-anchor="end" font-family="Liberation Sans" font-size="11.6" letter-spacing="0.3" fill="#222">2010-07</text><line x1="1288.62" y1="816" x2="1288.62" y2="819.5" stroke="#333" stroke-width="1"/><text transform="translate(1287.12,829.5) rotate(-45)" text-anchor="end" font-family="Liberation Sans" font-size="11.6" letter-spacing="0.3" fill="#222">2010-08</text><line x1="1321.10" y1="816" x2="1321.10" y2="819.5" stroke="#333" stroke-width="1"/><text transform="translate(1319.60,829.5) rotate(-45)" text-anchor="end" font-family="Liberation Sans" font-size="11.6" letter-spacing="0.3" fill="#222">2010-09</text><line x1="1353.58" y1="816" x2="1353.58" y2="819.5" stroke="#333" stroke-width="1"/><text transform="translate(1352.08,829.5) rotate(-45)" text-anchor="end" font-family="Liberation Sans" font-size="11.6" letter-spacing="0.3" fill="#222">2010-10</text><line x1="1386.05" y1="816" x2="1386.05" y2="819.5" stroke="#333" stroke-width="1"/><text transform="translate(1384.55,829.5) rotate(-45)" text-anchor="end" font-family="Liberation Sans" font-size="11.6" letter-spacing="0.3" fill="#222">2010-11</text><line x1="1418.53" y1="816" x2="1418.53" y2="819.5" stroke="#333" stroke-width="1"/><text transform="translate(1417.03,829.5) rotate(-45)" text-anchor="end" font-family="Liberation Sans" font-size="11.6" letter-spacing="0.3" fill="#222">2010-12</text><line x1="1451.00" y1="816" x2="1451.00" y2="819.5" stroke="#333" stroke-width="1"/><text transform="translate(1449.50,829.5) rotate(-45)" text-anchor="end" font-family="Liberation Sans" font-size="11.6" letter-spacing="0.3" fill="#222">2011-01</text><line x1="1483.47" y1="816" x2="1483.47" y2="819.5" stroke="#333" stroke-width="1"/><text transform="translate(1481.97,829.5) rotate(-45)" text-anchor="end" font-family="Liberation Sans" font-size="11.6" letter-spacing="0.3" fill="#222">2011-02</text><line x1="1515.95" y1="816" x2="1515.95" y2="819.5" stroke="#333" stroke-width="1"/><text transform="translate(1514.45,829.5) rotate(-45)" text-anchor="end" font-family="Liberation Sans" font-size="11.6" letter-spacing="0.3" fill="#222">2011-03</text><line x1="1548.42" y1="816" x2="1548.42" y2="819.5" stroke="#333" stroke-width="1"/><text transform="translate(1546.92,829.5) rotate(-45)" text-anchor="end" font-family="Liberation Sans" font-size="11.6" letter-spacing="0.3" fill="#222">2011-04</text><line x1="1580.90" y1="816" x2="1580.90" y2="819.5" stroke="#333" stroke-width="1"/><text transform="translate(1579.40,829.5) rotate(-45)" text-anchor="end" font-family="Liberation Sans" font-size="11.6" letter-spacing="0.3" fill="#222">2011-05</text><line x1="1613.38" y1="816" x2="1613.38" y2="819.5" stroke="#333" stroke-width="1"/><text transform="translate(1611.88,829.5) rotate(-45)" text-anchor="end" font-family="Liberation Sans" font-size="11.6" letter-spacing="0.3" fill="#222">2011-06</text><line x1="1645.85" y1="816" x2="1645.85" y2="819.5" stroke="#333" stroke-width="1"/><text transform="translate(1644.35,829.5) rotate(-45)" text-anchor="end" font-family="Liberation Sans" font-size="11.6" letter-spacing="0.3" fill="#222">2011-07</text><line x1="1678.32" y1="816" x2="1678.32" y2="819.5" stroke="#333" stroke-width="1"/><text transform="translate(1676.82,829.5) rotate(-45)" text-anchor="end" font-family="Liberation Sans" font-size="11.6" letter-spacing="0.3" fill="#222">2011-08</text><line x1="1710.80" y1="816" x2="1710.80" y2="819.5" stroke="#333" stroke-width="1"/><text transform="translate(1709.30,829.5) rotate(-45)" text-anchor="end" font-family="Liberation Sans" font-size="11.6" letter-spacing="0.3" fill="#222">2011-09</text><line x1="1743.28" y1="816" x2="1743.28" y2="819.5" stroke="#333" stroke-width="1"/><text transform="translate(1741.78,829.5) rotate(-45)" text-anchor="end" font-family="Liberation Sans" font-size="11.6" letter-spacing="0.3" fill="#222">2011-10</text><line x1="1775.75" y1="816" x2="1775.75" y2="819.5" stroke="#333" stroke-width="1"/><text transform="translate(1774.25,829.5) rotate(-45)" text-anchor="end" font-family="Liberation Sans" font-size="11.6" letter-spacing="0.3" fill="#222">2011-11</text><line x1="1808.22" y1="816" x2="1808.22" y2="819.5" stroke="#333" stroke-width="1"/><text transform="translate(1806.72,829.5) rotate(-45)" text-anchor="end" font-family="Liberation Sans" font-size="11.6" letter-spacing="0.3" fill="#222">2011-12</text><text x="1434.7" y="385.5" text-anchor="middle" font-family="Liberation Sans" font-weight="bold" font-size="16" letter-spacing="0.62" fill="#111">Monthly Profit and Expenses</text><text transform="translate(977.6,612) rotate(-90)" text-anchor="middle" font-family="Liberation Sans" font-weight="bold" font-size="13" letter-spacing="1.1" fill="#111">Amount ($)</text><text x="1434.7" y="874.8" text-anchor="middle" font-family="Liberation Sans" font-weight="bold" font-size="13" letter-spacing="1" fill="#111">Month</text><rect x="1714.5" y="412.5" width="126" height="37" rx="2" fill="#fff" fill-opacity="0.85" stroke="#d9d9d9" stroke-width="1"/><line x1="1717.5" y1="421.8" x2="1743" y2="421.8" stroke="#2e7d32" stroke-width="2.5"/><circle cx="1730" cy="421.8" r="3.6" fill="#2e7d32"/><line x1="1717.5" y1="438.5" x2="1743" y2="438.5" stroke="#c62828" stroke-width="2.5"/><rect x="1726.5" y="435" width="7" height="7" fill="#c62828"/><text x="1751" y="426" font-family="Liberation Sans" font-size="11.6" letter-spacing="0.55" fill="#222">Profit</text><text x="1751" y="442.5" font-family="Liberation Sans" font-size="11.6" letter-spacing="0.45" fill="#222">Total Expenses</text></svg>
</div>
<div class="abs" style="left:961px;top:867px;width:204.5px;height:30px;border-radius:10px;background:#fff;border:1px solid #e6e3dc"></div>
<div class="t" style="left:974.8px;top:875.53px;font-size:12.6px;color:#5f5f5f;font-weight:normal;letter-spacing:0.15px">Compare profit vs budget profit</div>
<div class="abs" style="left:1174px;top:867px;width:212.5px;height:30px;border-radius:10px;background:#fff;border:1px solid #e6e3dc"></div>
<div class="t" style="left:1187.5px;top:875.53px;font-size:12.6px;color:#5f5f5f;font-weight:normal;">Show sales and marketing trends</div>
<div class="abs" style="left:1395px;top:867px;width:213.5px;height:30px;border-radius:10px;background:#fff;border:1px solid #e6e3dc"></div>
<div class="t" style="left:1408.5px;top:875.53px;font-size:12.6px;color:#5f5f5f;font-weight:normal;letter-spacing:-0.3px">Analyze COGS and budget COGS</div>
<div class="hl" style="left:899px;top:905px;width:1021px"></div>
<div class="abs" style="left:1390px;top:826px;width:37px;height:37px;border-radius:50%;background:#fff;border:1px solid #e6e2da;box-shadow:0 4px 14px rgba(0,0,0,0.09)"></div>
<svg class="abs" style="left:1400px;top:835px" width="18" height="20" viewBox="0 0 18 20"><path d="M9 2 V17.5 M2.5 11 L9 17.5 L15.5 11" fill="none" stroke="#555" stroke-width="1.5"/></svg>
<div class="abs" style="left:961px;top:922px;width:896px;height:54px;border-radius:18px;background:#fff;border:1px solid #e6e3dc"></div>
<svg class="abs" style="left:983px;top:941px" width="18" height="18" viewBox="0 0 18 18"><path d="M9 1.5 V16.5 M1.5 9 H16.5" stroke="#444" stroke-width="1.6"/></svg>
<div class="t" style="left:1019.0px;top:940.86px;font-size:16px;color:#8a8a8a;font-weight:normal;">Ask anything.</div>
<div class="abs" style="left:1807.5px;top:935px;width:32px;height:32px;border-radius:50%;background:#efc4b7"></div>
<svg class="abs" style="left:1815.7px;top:942px" width="18" height="18" viewBox="0 0 18 18"><path d="M8.5 15 V3 M3.5 8 L8.5 3 L13.5 8" fill="none" stroke="#fff" stroke-width="1.6"/></svg>
<div class="abs" style="left:1914px;top:44px;width:6px;height:720px;border-radius:3px;background:#c9d3e0"></div>
</body></html>
